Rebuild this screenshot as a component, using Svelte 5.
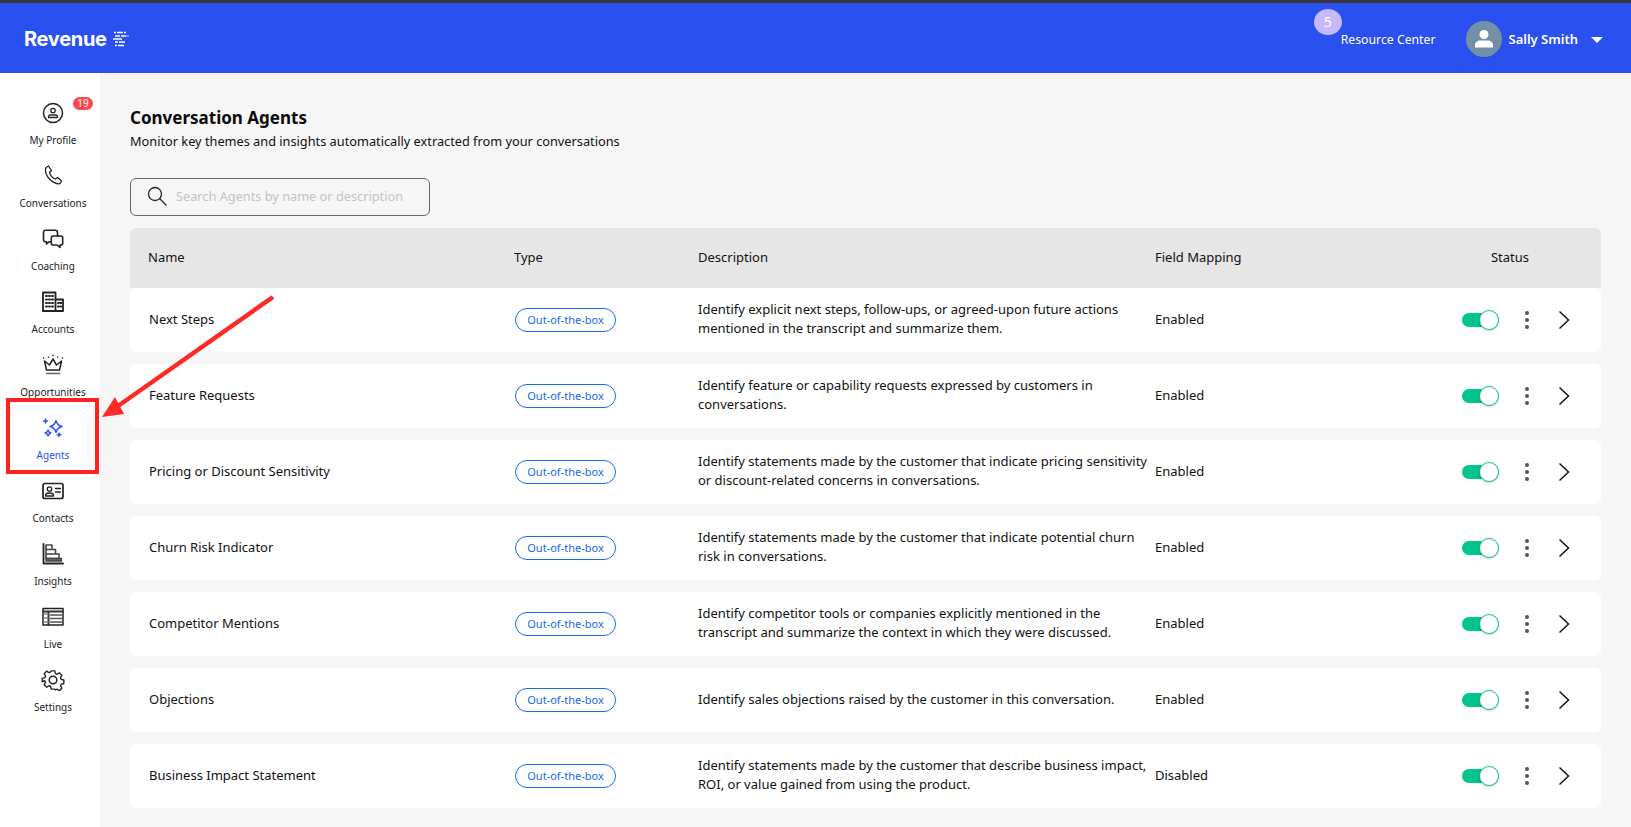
<script>
    const navItems = [
        { label: "My Profile", icon: "profile", badge: "19" },
        { label: "Conversations", icon: "phone" },
        { label: "Coaching", icon: "chat" },
        { label: "Accounts", icon: "building" },
        { label: "Opportunities", icon: "crown" },
        { label: "Agents", icon: "sparkle", active: true },
        { label: "Contacts", icon: "card" },
        { label: "Insights", icon: "bars" },
        { label: "Live", icon: "live" },
        { label: "Settings", icon: "gear" },
    ]

    const agents = [
        { name: "Next Steps", desc: ["Identify explicit next steps, follow-ups, or agreed-upon future actions", "mentioned in the transcript and summarize them."], mapping: "Enabled" },
        { name: "Feature Requests", desc: ["Identify feature or capability requests expressed by customers in", "conversations."], mapping: "Enabled" },
        { name: "Pricing or Discount Sensitivity", desc: ["Identify statements made by the customer that indicate pricing sensitivity", "or discount-related concerns in conversations."], mapping: "Enabled" },
        { name: "Churn Risk Indicator", desc: ["Identify statements made by the customer that indicate potential churn", "risk in conversations."], mapping: "Enabled" },
        { name: "Competitor Mentions", desc: ["Identify competitor tools or companies explicitly mentioned in the", "transcript and summarize the context in which they were discussed."], mapping: "Enabled" },
        { name: "Objections", desc: ["Identify sales objections raised by the customer in this conversation."], mapping: "Enabled" },
        { name: "Business Impact Statement", desc: ["Identify statements made by the customer that describe business impact,", "ROI, or value gained from using the product."], mapping: "Disabled" },
    ]
</script>

<div class="page">
    <header>
        <div class="logo">
            <span>Revenue</span>
            <svg width="17" height="16" viewBox="0 0 17 16" stroke="#fff" stroke-width="1.3" fill="none">
                <path d="M2 1.500h2M5 1.500h6M12 1.500h2M3 5h5M9 5h5.500M15.500 5h1M1 8h9M3 11h3M7 11h6M3 14.500h2M6 14.500h6" />
            </svg>
        </div>
        <div class="resource">
            <span class="count">5</span>
            <span class="resource-label">Resource Center</span>
        </div>
        <div class="user">
            <span class="avatar">
                <svg width="22" height="22" viewBox="0 0 22 22" fill="#fff">
                    <circle cx="11" cy="6.500" r="4.500" />
                    <path d="M2 19.500v-2.500c0-3 3-4.500 5-4.500h8c2 0 5 1.500 5 4.500v2.500z" />
                </svg>
            </span>
            <span class="user-name">Sally Smith</span>
            <span class="caret"></span>
        </div>
    </header>

    <div class="body">
        <nav>
            {#each navItems as item}
                <div class="nav-item" class:active={item.active}>
                    <span class="nav-icon">
                        <svg width="24" height="24" viewBox="0 0 24 24" fill="none" stroke="currentColor" stroke-width="1.300" stroke-linecap="round" stroke-linejoin="round">
                            {#if item.icon === "profile"}
                                <circle cx="12" cy="12" r="9.500" stroke-width="1.500" />
                                <circle cx="12" cy="9.500" r="2.200" />
                                <path d="M7.500 16.500v-.8c0-1 .8-1.700 1.800-1.700h5.400c1 0 1.800.7 1.800 1.700v.8z" />
                            {:else if item.icon === "phone"}
                                <path d="M5 3.500l2.500-1.500 3 4.500-2 1.800c.8 3 3.200 5.700 6 6.800l2-1.600 3.800 3.300c.3.500-.8 2.700-2.300 3-6 .2-13.500-7-13.500-13.500 0-1 .2-2 .5-2.800z" />
                            {:else if item.icon === "chat"}
                                <path d="M16.500 9V5.500c0-1.400-.8-2.300-2.200-2.300H4.700c-1.400 0-2.200.9-2.200 2.300v7c0 1.400.8 2.300 2.200 2.300h.8v2.200l2.500-2.200h2" stroke-width="1.600" />
                                <path d="M12 9h8c1 0 1.700.7 1.700 1.700v5.600c0 1-.7 1.700-1.700 1.700h-1v2.500l-3-2.500h-4c-1 0-1.700-.7-1.700-1.700v-5.600c0-1 .7-1.700 1.700-1.700z" stroke-width="1.600" />
                            {:else if item.icon === "building"}
                                <path d="M2 21V2.500h12.500V21z" stroke-width="1.800" />
                                <path d="M14.500 9.500H22V21H2" stroke-width="1.800" />
                                <path d="M5 6h1M8 6h1M11 6h1M5 9.500h1M8 9.500h1M11 9.500h1M5 13h1M8 13h1M11 13h1M5 16.500h1M8 16.500h1M11 16.500h1M17 13h.8M19.500 13h.8M17 16.500h.8M19.500 16.500h.8" stroke-width="2" />
                            {:else if item.icon === "crown"}
                                <path d="M3.500 8l5 4L12 6l3.500 6 5-4-2 9h-13z" stroke-width="1.500" />
                                <path d="M5.500 20.500h13" stroke-width="1.500" stroke="#666" />
                                <path d="M2.500 5h.1M12 2.500h.1M21.500 5h.1M7.500 4h.1M16.500 4h.1" stroke-width="1.500" />
                            {:else if item.icon === "sparkle"}
                                <path d="M15 4.500c.8 3.500 2.500 5.200 6 6-3.500.8-5.200 2.500-6 6-.8-3.500-2.500-5.200-6-6 3.500-.8 5.200-2.500 6-6z" />
                                <path d="M7 14c.4 1.900 1.100 2.600 3 3-1.900.4-2.600 1.100-3 3-.4-1.900-1.100-2.600-3-3 1.900-.4 2.600-1.100 3-3z" />
                                <path d="M4.500 3v4M2.500 5h4M18 17v3.500M16.200 18.800h3.600" stroke-width="1.500" />
                            {:else if item.icon === "card"}
                                <rect x="2" y="4.500" width="20" height="15" rx="2" stroke-width="1.700" />
                                <circle cx="8.500" cy="10" r="2.200" />
                                <path d="M4.500 17v-.5c0-1.500 1.500-2.500 4-2.500s4 1 4 2.500v.5zM14.500 9.500h5M14.500 13h5" />
                            {:else if item.icon === "bars"}
                                <path d="M2.500 2v19.500H22" stroke-width="1.800" />
                                <path d="M5 3h6v4.500H5zM5 7.500h9.500V12H5zM5 12h13v4.500H5z" stroke="#444" stroke-width="1.600" />
                                <path d="M5 16.500h15.500v2.500H5z" fill="#666" stroke="#444" />
                            {:else if item.icon === "live"}
                                <rect x="2" y="3.500" width="20" height="16.500" stroke-width="1.500" />
                                <path d="M2 6.500h20M7.500 6.500V20" stroke-width="2" stroke="#333" />
                                <path d="M3 9h4M3 13h4M3 17h4" stroke="#888" />
                                <path d="M9.500 10h11M9.500 13.500h11M9.500 17h11" stroke="#555" stroke-width="1.500" />
                            {:else if item.icon === "gear"}
                                <circle cx="12" cy="12" r="3.800" stroke-width="1.500" />
                                <path d="M10 2h4l.6 2.900 1.900.8 2.500-1.600 2.800 2.900-1.600 2.400.8 1.900 2.900.7v3.800l-2.900.7-.8 1.900 1.600 2.400-2.800 2.900-2.500-1.600-1.900.8L14 22h-4l-.6-2.900-1.900-.8-2.500 1.600-2.800-2.900 1.600-2.400-.8-1.900L.1 13.900v-3.800L3 9.400l.8-1.900-1.600-2.400L5 2.200l2.500 1.600 1.900-.8z" transform="translate(1.100 1.100) scale(.91)" stroke-width="1.500" />
                            {/if}
                        </svg>
                        {#if item.badge}<span class="badge">{item.badge}</span>{/if}
                    </span>
                    <span class="nav-label">{item.label}</span>
                </div>
            {/each}
        </nav>

        <main>
            <h1>Conversation Agents</h1>
            <p class="sub">Monitor key themes and insights automatically extracted from your conversations</p>

            <div class="search">
                <svg width="20" height="20" viewBox="0 0 20 20" fill="none" stroke="#222" stroke-width="1.300" stroke-linecap="round">
                    <circle cx="8" cy="8" r="6.500" />
                    <path d="M13 13l6 6" />
                </svg>
                <span>Search Agents by name or description</span>
            </div>

            <div class="table-head">
                <span>Name</span>
                <span>Type</span>
                <span>Description</span>
                <span>Field Mapping</span>
                <span class="status-head">Status</span>
            </div>

            <div class="rows">
                {#each agents as agent}
                    <div class="row">
                        <span>{agent.name}</span>
                        <span class="type"><span class="pill">Out-of-the-box</span></span>
                        <span class="desc">
                            {#each agent.desc as line}<span>{line}</span>{/each}
                        </span>
                        <span>{agent.mapping}</span>
                        <span class="actions">
                            <span class="toggle"><span class="knob"></span></span>
                            <span class="dots"><i></i><i></i><i></i></span>
                            <svg width="12" height="20" viewBox="0 0 12 20" fill="none" stroke="#111" stroke-width="1.500">
                                <path d="M1.500 1.500L10.500 10 1.500 18.500" />
                            </svg>
                        </span>
                    </div>
                {/each}
            </div>
        </main>
    </div>

    <!-- annotation drawn on top of the screenshot -->
    <div class="highlight"></div>
    <svg class="arrow" width="300" height="160" viewBox="0 0 300 160">
        <path d="M273 10L118 119" stroke="#ff2a26" stroke-width="4.500" fill="none" />
        <path d="M102 130L115 110 124 127z" fill="#ff2a26" />
    </svg>
</div>

<style>
    :global(body) {
        margin: 0;
        background: #f6f6f6;
    }

    .page {
        position: relative;
        width: 1631px;
        height: 827px;
        overflow: hidden;
        font-family: "Noto Sans", "Open Sans", sans-serif;
        font-size: 13px;
        color: #111;
    }

    header {
        height: 70px;
        border-top: 3px solid #36363c;
        background: #2b50f0;
        color: #fff;
        display: flex;
        align-items: center;
        padding: 0 24px;
    }

    .logo {
        display: flex;
        align-items: center;
        gap: 5px;
        font-family: Inter, sans-serif;
        font-weight: 700;
        font-size: 20px;
        letter-spacing: -0.3px;
        margin-top: 2px;
    }

    .resource {
        position: relative;
        margin-left: auto;
        margin-top: 2px;
    }

    .resource-label {
        font-size: 12.25px;
    }

    .count {
        position: absolute;
        left: -27px;
        top: -21px;
        width: 28px;
        height: 26px;
        border-radius: 50%;
        background: #c7baff;
        text-align: center;
        line-height: 26px;
        font-size: 14px;
    }

    .user {
        display: flex;
        align-items: center;
        margin-left: 30px;
        margin-right: 4px;
        margin-top: 1px;
    }

    .avatar {
        width: 36px;
        height: 36px;
        border-radius: 50%;
        background: #7390a8;
        display: flex;
        align-items: center;
        justify-content: center;
    }

    .user-name {
        margin-left: 7px;
        font-weight: 600;
        font-size: 13px;
    }

    .caret {
        margin-left: 13px;
        margin-top: 2px;
        border-left: 6px solid transparent;
        border-right: 6px solid transparent;
        border-top: 6px solid #fff;
    }

    .body {
        display: flex;
        height: 754px;
    }

    nav {
        width: 100px;
        background: #fff;
        padding: 27px 0 0 6px;
        box-sizing: border-box;
    }

    .nav-item {
        height: 63px;
        display: flex;
        flex-direction: column;
        align-items: center;
    }

    .nav-icon {
        position: relative;
        width: 24px;
        height: 26px;
        display: flex;
        align-items: center;
        justify-content: center;
        color: #222;
    }

    .nav-label {
        margin-top: 6px;
        font-size: 10px;
        line-height: 16px;
        color: #222;
    }

    .active .nav-icon,
    .active .nav-label {
        color: #2b50f0;
    }

    .badge {
        position: absolute;
        left: 32px;
        top: -3px;
        width: 20px;
        height: 13px;
        border-radius: 7px;
        background: #fc4650;
        color: #fff;
        font-size: 10px;
        line-height: 13px;
        text-align: center;
    }

    main {
        flex: 1;
        padding: 34px 30px 0;
        min-width: 0;
    }

    h1 {
        margin: 0;
        font-size: 17px;
        line-height: 22px;
        font-weight: 700;
        color: #0b0b0b;
    }

    .sub {
        margin: 3px 0 0;
        font-size: 12.75px;
        line-height: 18px;
    }

    .search {
        margin-top: 28px;
        width: 300px;
        height: 38px;
        box-sizing: border-box;
        border: 1px solid #666;
        border-radius: 6px;
        display: flex;
        align-items: center;
        gap: 9px;
        padding: 0 0 2px 16px;
        font-size: 12.75px;
        color: #c4c4c4;
    }

    .table-head,
    .row {
        display: grid;
        align-items: center;
        box-sizing: border-box;
    }

    .table-head {
        margin-top: 12px;
        height: 60px;
        padding: 0 72px 2px 18px;
        background: #e6e6e6;
        border-radius: 6px 6px 0 0;
        grid-template-columns: 366px 184px 457px 1fr auto;
    }

    .rows {
        display: flex;
        flex-direction: column;
        gap: 12px;
    }

    .row {
        height: 64px;
        padding: 0 0 2px 19px;
        background: #fff;
        border-radius: 6px;
        grid-template-columns: 366px 183px 457px 1fr auto;
    }

    .type {
        padding-top: 2px;
    }

    .pill {
        display: block;
        width: 101px;
        height: 24px;
        box-sizing: border-box;
        border: 1px solid #1768f0;
        border-radius: 12px;
        color: #1768f0;
        text-align: center;
        font-size: 11px;
        line-height: 22px;
    }

    .desc {
        display: flex;
        flex-direction: column;
        line-height: 19px;
        white-space: nowrap;
    }

    .actions {
        display: flex;
        align-items: center;
        padding: 2px 31px 0 0;
    }

    .toggle {
        position: relative;
        width: 36px;
        height: 14px;
        border-radius: 7px;
        background: #00c48c;
        display: block;
    }

    .knob {
        position: absolute;
        right: -1px;
        top: -3px;
        width: 20px;
        height: 20px;
        box-sizing: border-box;
        background: #fff;
        border: 1px solid #00c48c;
        border-radius: 50%;
        box-shadow: 0 1px 2px rgba(0, 0, 0, 0.2);
    }

    .dots {
        display: flex;
        flex-direction: column;
        gap: 3px;
        margin: 0 29px 0 27px;
    }

    .dots i {
        display: block;
        width: 4px;
        height: 4px;
        border-radius: 50%;
        background: #555;
    }

    .highlight {
        position: absolute;
        left: 6px;
        top: 398px;
        width: 93px;
        height: 76px;
        box-sizing: border-box;
        border: 4px solid #ff2020;
    }

    .arrow {
        position: absolute;
        left: 0;
        top: 287px;
    }
</style>
